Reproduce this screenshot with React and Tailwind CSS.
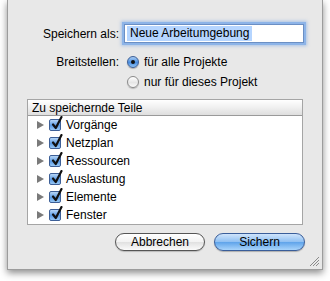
import React from "react";

const items = ["Vorgänge", "Netzplan", "Ressourcen", "Auslastung", "Elemente", "Fenster"];

const Radio = ({ checked }) =>
  checked ? (
    <span className="relative flex h-[12px] w-[12px] shrink-0 items-center justify-center rounded-full border border-[#3d5f97] bg-[linear-gradient(#a9cdf4,#4a8ee0_55%,#8fc2f5)] shadow-[0_1px_1px_rgba(0,0,0,0.25)]">
      <span className="h-[4px] w-[4px] rounded-full bg-[#111]" />
    </span>
  ) : (
    <span className="flex h-[12px] w-[12px] shrink-0 rounded-full border border-[#8a8a8a] bg-[linear-gradient(#ffffff,#e6e6e6_55%,#fafafa)] shadow-[0_1px_1px_rgba(0,0,0,0.2)]" />
  );

const Check = () => (
  <span className="relative block h-[12px] w-[12px] shrink-0 rounded-[2px] border border-[#3d5f97] bg-[linear-gradient(#b7d6f6,#5a9ae4_55%,#98c8f5)]">
    <svg className="absolute left-[1px] top-[-4px]" width="12" height="14" viewBox="0 0 12 14">
      <path d="M2 8.5 L4.8 12 L10.5 1" fill="none" stroke="#111" strokeWidth="2.2" strokeLinecap="round" strokeLinejoin="round" />
    </svg>
  </span>
);

const Row = ({ label }) => (
  <div className="flex h-[18px] items-center">
    <span className="ml-[9px] h-0 w-0 border-y-[4px] border-l-[7px] border-y-transparent border-l-[#7a7a7a]" />
    <span className="ml-[5px] block"><Check /></span>
    <span className="ml-[5px] text-[12px] leading-none text-black">{label}</span>
  </div>
);

export default function App() {
  return (
    <div className="h-[281px] w-[330px] bg-white font-['Liberation_Sans',Arial,sans-serif]">
      <div className="relative ml-[7px] flex h-[270px] w-[316px] flex-col border-x border-b border-[#9c9c9c] bg-[#e8e8e8] shadow-[0_3px_7px_rgba(0,0,0,0.45)]">
        <div className="mt-[24px] grid grid-cols-[111px_1fr] items-center">
          <span className="text-right text-[12px] text-black">Speichern als:</span>
          <div className="ml-[5px] flex h-[19px] w-[180px] items-center border border-[#6b8fc4] bg-white shadow-[0_0_0_2px_#8db4e8,0_0_3px_3px_rgba(110,160,230,0.5)]">
            <span className="ml-[2px] bg-[#b5d5ff] px-[3px] text-[12px] leading-[15px] text-black">Neue Arbeitumgebung</span>
          </div>
        </div>

        <div className="mt-[9px] grid grid-cols-[111px_1fr] items-center">
          <span className="text-right text-[12px] text-black">Breitstellen:</span>
          <div className="ml-[8px] flex h-[20px] items-center gap-[5px]">
            <Radio checked />
            <span className="text-[12px] text-black">für alle Projekte</span>
          </div>
          <span />
          <div className="ml-[8px] flex h-[20px] items-center gap-[5px]">
            <Radio />
            <span className="text-[12px] text-black">nur für dieses Projekt</span>
          </div>
        </div>

        <div className="ml-[19px] mt-[7px] w-[276px] border border-[#a5a5a5] bg-white">
          <div className="flex h-[16px] items-center border-b border-[#9a9a9a] bg-[linear-gradient(#ffffff,#f0f0f0_50%,#dedede)] pl-[4px] text-[12px] text-black">
            Zu speichernde Teile
          </div>
          {items.map((it) => (
            <Row key={it} label={it} />
          ))}
        </div>

        <div className="mt-[8px] flex gap-[9px] pl-[107px]">
          <button className="flex h-[18px] w-[90px] items-center justify-center rounded-full border border-[#555] bg-[linear-gradient(#ffffff,#f2f2f2_50%,#e0e0e0_51%,#fbfbfb)] text-[12px] text-black shadow-[0_1px_1px_rgba(0,0,0,0.2)]">
            Abbrechen
          </button>
          <button className="flex h-[18px] w-[91px] items-center justify-center rounded-full border border-[#3a5e9a] bg-[linear-gradient(#cfe4fb,#8ebff2_50%,#5ea3ea_51%,#a9d4fb)] text-[12px] text-black shadow-[0_1px_1px_rgba(0,0,0,0.25)]">
            Sichern
          </button>
        </div>

        <svg className="absolute bottom-[2px] right-[2px]" width="11" height="11" viewBox="0 0 11 11">
          <path d="M1 10 L10 1 M4 10 L10 4 M7 10 L10 7" stroke="#8a8a8a" strokeWidth="1" />
        </svg>
      </div>
    </div>
  );
}
